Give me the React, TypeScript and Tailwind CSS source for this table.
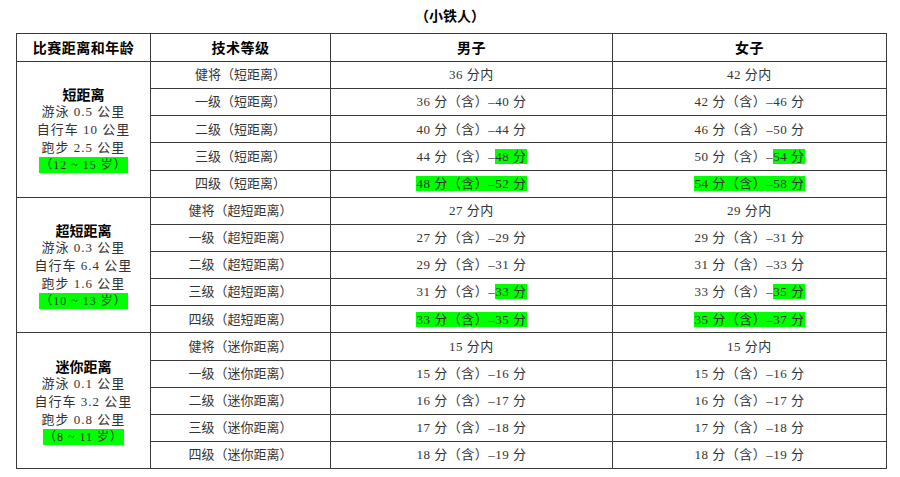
import React from "react";

type Cell = { pre?: string; hl?: string };

const groups = [
  {
    name: "短距离",
    lines: ["游泳 0.5 公里", "自行车 10 公里", "跑步 2.5 公里"],
    age: "（12 ~ 15 岁）",
    tag: "短距离",
    rows: [
      [{ pre: "36 分内" }, { pre: "42 分内" }],
      [{ pre: "36 分（含）–40 分" }, { pre: "42 分（含）–46 分" }],
      [{ pre: "40 分（含）–44 分" }, { pre: "46 分（含）–50 分" }],
      [{ pre: "44 分（含）–", hl: "48 分" }, { pre: "50 分（含）–", hl: "54 分" }],
      [{ hl: "48 分（含）–52 分" }, { hl: "54 分（含）–58 分" }],
    ] as Cell[][],
  },
  {
    name: "超短距离",
    lines: ["游泳 0.3 公里", "自行车 6.4 公里", "跑步 1.6 公里"],
    age: "（10 ~ 13 岁）",
    tag: "超短距离",
    rows: [
      [{ pre: "27 分内" }, { pre: "29 分内" }],
      [{ pre: "27 分（含）–29 分" }, { pre: "29 分（含）–31 分" }],
      [{ pre: "29 分（含）–31 分" }, { pre: "31 分（含）–33 分" }],
      [{ pre: "31 分（含）–", hl: "33 分" }, { pre: "33 分（含）–", hl: "35 分" }],
      [{ hl: "33 分（含）–35 分" }, { hl: "35 分（含）–37 分" }],
    ] as Cell[][],
  },
  {
    name: "迷你距离",
    lines: ["游泳 0.1 公里", "自行车 3.2 公里", "跑步 0.8 公里"],
    age: "（8 ~ 11 岁）",
    tag: "迷你距离",
    rows: [
      [{ pre: "15 分内" }, { pre: "15 分内" }],
      [{ pre: "15 分（含）–16 分" }, { pre: "15 分（含）–16 分" }],
      [{ pre: "16 分（含）–17 分" }, { pre: "16 分（含）–17 分" }],
      [{ pre: "17 分（含）–18 分" }, { pre: "17 分（含）–18 分" }],
      [{ pre: "18 分（含）–19 分" }, { pre: "18 分（含）–19 分" }],
    ] as Cell[][],
  },
];

const levels = ["健将", "一级", "二级", "三级", "四级"];

function CellText({ c }: { c: Cell }) {
  return (
    <span>
      {c.pre}
      {c.hl && <span className="bg-[#00ff00]">{c.hl}</span>}
    </span>
  );
}

export default function App() {
  return (
    <div
      className="w-[900px] h-[477px] bg-white overflow-hidden"
      style={{ fontFamily: '"Liberation Serif", "Noto Sans CJK SC", serif' }}
    >
      <div className="h-[33px] flex items-center justify-center pb-[2px]">
        <span
          className="text-[14px] font-bold text-black"
          style={{ fontFamily: '"Noto Sans CJK SC", sans-serif' }}
        >
          （小铁人）
        </span>
      </div>
      <table className="ml-[16px] border-collapse table-fixed w-[870px] text-[13px] text-[#333] tracking-[0.5px]">
        <colgroup>
          <col className="w-[134px]" />
          <col className="w-[180px]" />
          <col className="w-[282px]" />
          <col className="w-[274px]" />
        </colgroup>
        <thead>
          <tr
            className="h-[28px] text-[14px] font-bold text-black"
            style={{ fontFamily: '"Noto Sans CJK SC", sans-serif' }}
          >
            <th className="border border-[#3a3a3a] p-0 font-bold">比赛距离和年龄</th>
            <th className="border border-[#3a3a3a] p-0 font-bold">技术等级</th>
            <th className="border border-[#3a3a3a] p-0 font-bold">男子</th>
            <th className="border border-[#3a3a3a] p-0 font-bold">女子</th>
          </tr>
        </thead>
        <tbody>
          {groups.map((g) =>
            g.rows.map((r, i) => (
              <tr key={g.name + i} className="h-[27.15px]">
                {i === 0 && (
                  <td rowSpan={5} className="border border-[#3a3a3a] p-0 text-center align-middle">
                    <div className="flex flex-col items-center leading-[18px]">
                      <div
                        className="text-[14px] font-bold text-black tracking-normal"
                        style={{ fontFamily: '"Noto Sans CJK SC", sans-serif' }}
                      >
                        {g.name}
                      </div>
                      {g.lines.map((l) => (
                        <div key={l} className="tracking-[1px]">{l}</div>
                      ))}
                      <div className="bg-[#00ff00] leading-[16px] px-[1px] text-[12px] tracking-[1px]">{g.age}</div>
                    </div>
                  </td>
                )}
                <td className="border border-[#3a3a3a] p-0 text-center tracking-[0px]">
                  {levels[i]}（{g.tag}）
                </td>
                <td className="border border-[#3a3a3a] p-0 text-center">
                  <CellText c={r[0]} />
                </td>
                <td className="border border-[#3a3a3a] p-0 text-center">
                  <CellText c={r[1]} />
                </td>
              </tr>
            ))
          )}
        </tbody>
      </table>
    </div>
  );
}
